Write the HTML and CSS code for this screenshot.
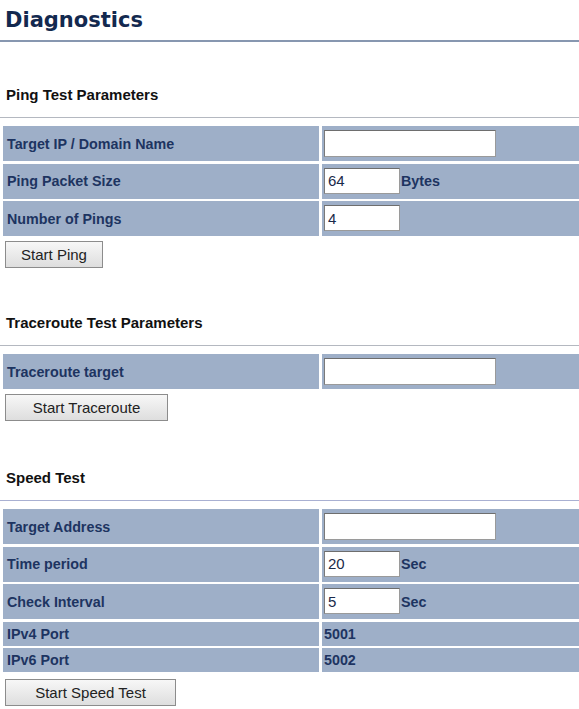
FILE: index.html
```html
<!DOCTYPE html>
<html lang="en">
<head>
  <meta charset="UTF-8">
  <title>Diagnostics</title>
  <link rel="stylesheet" href="styles.css">
</head>
<body>
  <div class="page">
    <h1 class="title">Diagnostics</h1>
    <div class="title-rule"></div>

    <section class="block">
      <h2 class="block-title">Ping Test Parameters</h2>
      <div class="rule"></div>
      <div class="form-grid">
        <div class="label">Target IP / Domain Name</div>
        <div class="field"><input type="text" class="input-wide"></div>
        <div class="label">Ping Packet Size</div>
        <div class="field"><input type="text" class="input-short" value="64"> <span class="unit">Bytes</span></div>
        <div class="label">Number of Pings</div>
        <div class="field"><input type="text" class="input-short" value="4"></div>
      </div>
      <button class="btn btn-ping">Start Ping</button>
    </section>

    <section class="block">
      <h2 class="block-title">Traceroute Test Parameters</h2>
      <div class="rule"></div>
      <div class="form-grid">
        <div class="label">Traceroute target</div>
        <div class="field"><input type="text" class="input-wide"></div>
      </div>
      <button class="btn btn-trace">Start Traceroute</button>
    </section>

    <section class="block block-speed">
      <h2 class="block-title">Speed Test</h2>
      <div class="rule rule-blue"></div>
      <div class="form-grid">
        <div class="label">Target Address</div>
        <div class="field"><input type="text" class="input-wide"></div>
        <div class="label">Time period</div>
        <div class="field"><input type="text" class="input-short" value="20"> <span class="unit">Sec</span></div>
        <div class="label">Check Interval</div>
        <div class="field"><input type="text" class="input-short" value="5"> <span class="unit">Sec</span></div>
        <div class="label row-short">IPv4 Port</div>
        <div class="field row-short"><span class="value">5001</span></div>
        <div class="label row-short">IPv6 Port</div>
        <div class="field row-short"><span class="value">5002</span></div>
      </div>
      <button class="btn btn-speed">Start Speed Test</button>
    </section>
  </div>
</body>
</html>
```

FILE: styles.css
```css
body {
  margin: 0;
  background: #ffffff;
  font-family: 'Liberation Sans', Arial, sans-serif;
  color: #1d3461;
}

.title {
  margin: 7px 0 0 5px;
  font-family: 'DejaVu Sans', Verdana, sans-serif;
  font-size: 21px;
  line-height: 26px;
  font-weight: bold;
  color: #13294f;
}

.title-rule {
  height: 2px;
  margin-top: 7px;
  background: #8797b0;
}

.block {
  padding-top: 44px;
}

.block + .block {
  padding-top: 46px;
}

.block-speed .block-title {
  margin-top: 2px;
}

.block-title {
  margin: 0 0 0 6px;
  font-size: 15px;
  line-height: 18px;
  font-weight: bold;
  color: #111111;
}

.rule {
  height: 1px;
  margin-top: 13px;
  background: #b4b8c0;
}

.rule-blue {
  background: #a9b0d2;
}

.form-grid {
  display: grid;
  grid-template-columns: 316px 1fr;
  column-gap: 3px;
  row-gap: 2.5px;
  margin: 8px 0 0 3px;
}

.label,
.field {
  display: flex;
  align-items: center;
  height: 35px;
  box-sizing: border-box;
  background: #9eafc8;
}

.label {
  padding-left: 4px;
  font-size: 14.3px;
  font-weight: bold;
  color: #1d3461;
}

.field {
  padding-left: 2px;
  align-items: baseline;
  padding-top: 4px;
}

.form-grid .row-short {
  height: 24px;
  align-items: center;
  padding-top: 0;
}

input {
  box-sizing: border-box;
  height: 27px;
  padding: 0 3px;
  margin: 0;
  font-family: 'Liberation Sans', Arial, sans-serif;
  font-size: 15px;
  color: #1a2a4a;
  background: #ffffff;
  border: 1px solid #9a9a9a;
  border-top-color: #6e6e6e;
  border-left-color: #7a7a7a;
  outline: none;
}

.input-wide {
  width: 172px;
}

.input-short {
  width: 76px;
  height: 26px;
}

.unit {
  margin-left: 1px;
  font-size: 14.3px;
  font-weight: bold;
  color: #1d3461;
}

.value {
  font-size: 14.3px;
  font-weight: bold;
  color: #1d3461;
}

.btn {
  display: block;
  height: 27px;
  margin: 5px 0 0 5px;
  padding: 0;
  font-family: 'Liberation Sans', Arial, sans-serif;
  font-size: 15px;
  color: #222222;
  background: linear-gradient(#f7f7f7, #dedede);
  border: 1px solid #8c8c8c;
}

.btn-ping {
  width: 98px;
}

.btn-trace {
  width: 163px;
}

.btn-speed {
  width: 171px;
  margin-top: 7px;
}
```
